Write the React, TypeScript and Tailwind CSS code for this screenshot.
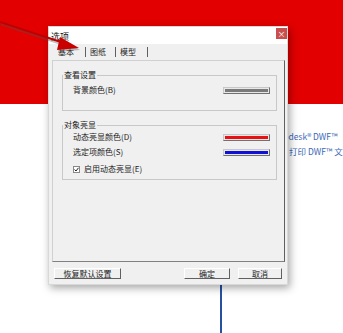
import React from 'react';

const font = { fontFamily: '"Noto Sans CJK SC", "Noto Sans", sans-serif' };

function Swatch({ color }: { color: string }) {
    return (
        <div className="w-[47px] h-[7px] border border-[#c8c8c8] border-b-[#707070] border-r-[#707070] p-[1px] bg-[#e8e8e8]">
            <div className={`w-full h-full ${color}`} />
        </div>
    );
}

function Btn({ label, w }: { label: string; w: string }) {
    return (
        <div className={`${w} h-[11px] flex items-center justify-center border border-white border-b-[#606060] border-r-[#606060] bg-[#f0f0f0] text-[8px] leading-none text-[#222]`}>
            {label}
        </div>
    );
}

export default function App() {
    return (
        <div className="relative w-[343px] h-[333px] overflow-hidden bg-white" style={font}>
            {/* red backdrop */}
            <div className="h-[104px] bg-[#e20000]" />

            {/* page text behind dialog */}
            <div className="absolute left-[270px] top-[129px] text-[8.5px] leading-[15px] text-[#3a68b8] whitespace-nowrap">
                Autodesk® DWF™
            </div>
            <div className="absolute left-[289px] top-[144px] text-[8.5px] leading-[15px] text-[#3a68b8] whitespace-nowrap">
                打印 DWF™ 文
            </div>
            <div className="absolute left-[220px] top-[280px] w-[2px] h-[60px] bg-[#2452a0]" />

            {/* dialog */}
            <div className="absolute left-[48px] top-[26px] w-[240px] h-[259px] bg-[#f0f0f0] border border-[#d8d8d8] shadow-[2px_3px_8px_rgba(0,0,0,0.35)] flex flex-col">
                <div className="h-[17px] bg-white flex items-center justify-between pl-[2px]">
                    <span className="text-[9px] leading-none text-[#111] mt-[1px]">选项</span>
                    <div className="w-[11px] h-[11px] bg-[#c94f4f] flex items-center justify-center text-white text-[8px] leading-none self-start mt-[1px]">×</div>
                </div>

                <div className="flex-1 flex flex-col pl-[3px] pr-[2px]">
                    {/* tabs */}
                    <div className="h-[16px] flex items-center text-[8px] leading-none text-[#222]">
                        <div className="w-[34px] h-[10px] flex items-center pl-[6px] border-r border-[#606060]">基本</div>
                        <div className="w-[30px] h-[10px] flex items-center pl-[4px] border-r border-[#606060]">图纸</div>
                        <div className="w-[32px] h-[10px] flex items-center pl-[4px] border-r border-[#606060]">模型</div>
                    </div>

                    {/* panel */}
                    <div className="h-[202px] border border-[#d0d0d0] border-r-[#606060] border-b-[#808080] pl-[9px] pr-[7px] pt-[10px] text-[8px] leading-none text-[#222]">
                        <fieldset className="h-[40px] border border-[#c8c8c8] px-[10px]">
                            <legend className="px-[1px] -ml-[10px] text-[8px]">查看设置</legend>
                            <div className="flex items-center justify-between mt-[7px] -mr-[4px]">
                                <span>背景颜色(B)</span>
                                <Swatch color="bg-[#7a7a7a]" />
                            </div>
                        </fieldset>

                        <fieldset className="h-[59px] mt-[10px] border border-[#c8c8c8] px-[10px]">
                            <legend className="px-[1px] -ml-[10px] text-[8px]">对象亮显</legend>
                            <div className="flex flex-col gap-[7px] mt-[4px] -mr-[4px]">
                                <div className="flex items-center justify-between">
                                    <span>动态亮显颜色(D)</span>
                                    <Swatch color="bg-[#e81010]" />
                                </div>
                                <div className="flex items-center justify-between">
                                    <span>选定项颜色(S)</span>
                                    <Swatch color="bg-[#1010d8]" />
                                </div>
                                <div className="flex items-center gap-[4px] mt-[2px]">
                                    <div className="w-[7px] h-[7px] border border-[#888] bg-white flex items-center justify-center">
                                        <svg width="5" height="5" viewBox="0 0 5 5">
                                            <path d="M0.5 2.5 L2 4 L4.5 0.8" fill="none" stroke="#222" strokeWidth="1" />
                                        </svg>
                                    </div>
                                    <span>启用动态亮显(E)</span>
                                </div>
                            </div>
                        </fieldset>
                    </div>

                    {/* buttons */}
                    <div className="flex items-center mt-[6px] pl-[2px] pr-[3px]">
                        <Btn label="恢复默认设置" w="w-[67px]" />
                        <div className="flex-1" />
                        <Btn label="确定" w="w-[46px]" />
                        <div className="w-[8px]" />
                        <Btn label="取消" w="w-[44px]" />
                    </div>
                </div>
            </div>

            {/* annotation arrow */}
            <svg className="absolute left-0 top-0" width="100" height="60" viewBox="0 0 100 60">
                <g opacity="0.35" transform="translate(1,2)">
                    <path d="M0 22 L64 43" stroke="#555" strokeWidth="2.5" />
                    <path d="M60 37 L79 48 L57 50 Z" fill="#555" />
                </g>
                <path d="M0 22 L64 43" stroke="#c00000" strokeWidth="2" />
                <path d="M60 37 L79 48 L57 50 Z" fill="#c80000" />
            </svg>
        </div>
    );
}
